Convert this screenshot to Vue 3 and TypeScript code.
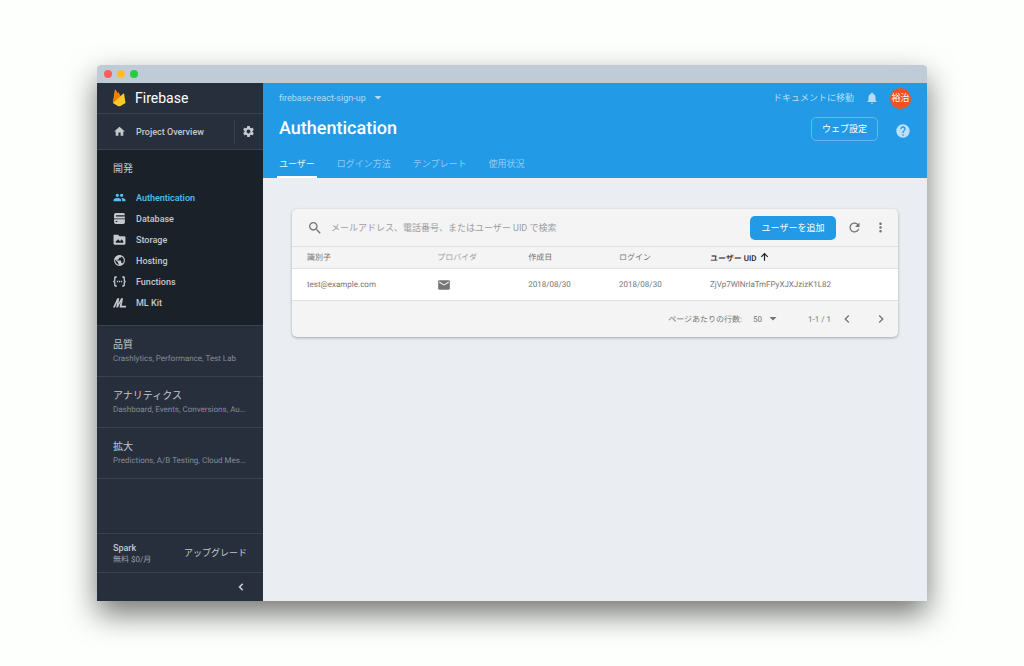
<script setup lang="ts">
import { ref } from 'vue'

interface NavItem {
  label: string
  path: string
  evenodd?: boolean
}
interface Group {
  title: string
  items: string
}

const nav: NavItem[] = [
  {
    label: 'Authentication',
    path: 'M16 11c1.66 0 2.99-1.34 2.99-3S17.66 5 16 5s-3 1.34-3 3 1.34 3 3 3zm-8 0c1.66 0 2.99-1.34 2.99-3S9.66 5 8 5 5 6.34 5 8s1.34 3 3 3zm0 2c-2.33 0-7 1.17-7 3.5V19h14v-2.5c0-2.33-4.67-3.5-7-3.5zm8 0c-.29 0-.62.02-.97.05 1.16.84 1.97 1.97 1.97 3.45V19h6v-2.5c0-2.33-4.67-3.5-7-3.5z',
  },
  {
    label: 'Database',
    path: 'M5 2H19Q22 2 22 5V12H2V5Q2 2 5 2ZM5.500 6V8.500H22V6ZM2 13.500H22V19Q22 22 19 22H5Q2 22 2 19ZM5 16.500V18.500H8V16.500Z',
    evenodd: true,
  },
  {
    label: 'Storage',
    path: 'M1 3H9.500L12 6H21Q23 6 23 8V19.500Q23 21.500 21 21.500H3Q1 21.500 1 19.500ZM5 18H19V15L16 11.500L13 15L9.500 11.500L5 15.500Z',
    evenodd: true,
  },
  {
    label: 'Hosting',
    path: 'M12 2C6.48 2 2 6.48 2 12s4.48 10 10 10 10-4.48 10-10S17.520 2 12 2zm-1 17.930c-3.950-.49-7-3.850-7-7.930 0-.62.08-1.210.21-1.790L9 15v1c0 1.100.9 2 2 2v1.930zm6.900-2.540c-.26-.81-1-1.390-1.900-1.390h-1v-3c0-.55-.45-1-1-1H8v-2h2c.55 0 1-.45 1-1V7h2c1.100 0 2-.9 2-2v-.41c2.930 1.190 5 4.060 5 7.410 0 2.080-.8 3.970-2.100 5.390z',
  },
  {
    label: 'Functions',
    path: 'M7 2.500V5H5.500Q4.500 5 4.500 6V9.500Q4.500 11.500 3 12Q4.500 12.500 4.500 14.500V18Q4.500 19 5.500 19H7V21.500H4.500Q2 21.500 2 19V14.500Q2 13.200 .5 13.200V10.800Q2 10.800 2 9.500V5Q2 2.500 4.500 2.500ZM17 2.500V5H18.500Q19.500 5 19.500 6V9.500Q19.500 11.500 21 12Q19.500 12.500 19.500 14.500V18Q19.500 19 18.500 19H17V21.500H19.500Q22 21.500 22 19V14.500Q22 13.200 23.500 13.200V10.800Q22 10.800 22 9.500V5Q22 2.500 19.500 2.500ZM7 10.800H9.400V13.200H7ZM10.800 10.800H13.200V13.200H10.800ZM14.600 10.800H17V13.200H14.600Z',
  },
  {
    label: 'ML Kit',
    path: 'M0 21L8 4H11.500L10 14L15 4H18.500L16 18H24V21H12L14 11L9 21H6L8 11L3.500 21Z',
  },
]

const groups: Group[] = [
  { title: '品質', items: 'Crashlytics, Performance, Test Lab' },
  { title: 'アナリティクス', items: 'Dashboard, Events, Conversions, Au…' },
  { title: '拡大', items: 'Predictions, A/B Testing, Cloud Mes…' },
]

const tabs = ['ユーザー', 'ログイン方法', 'テンプレート', '使用状況']
const activeTab = ref(0)
const activeNav = ref(0)
const query = ref('')
const pageSize = ref('50')

const users = [
  { id: 'test@example.com', created: '2018/08/30', login: '2018/08/30', uid: 'ZjVp7WlNrIaTmFPyXJXJzizK1L82' },
]
</script>

<template>
  <div class="desktop">
    <div class="window">
      <div class="titlebar">
        <span class="dot red"></span>
        <span class="dot yellow"></span>
        <span class="dot green"></span>
      </div>
      <div class="shell">
        <aside class="sidebar">
          <a class="brand" href="#">
            <svg class="flame" viewBox="0 0 24 32" aria-hidden="true">
              <path d="M1 25L4.500 2.500C4.700 1.300 6 1.200 6.500 2.200L10.500 9.500L1 25Z" fill="#ffa000" />
              <path d="M1 25L6 3L9 8C9.300 6.500 10.900 4.800 11.500 6L15 13Z" fill="#f57c00" />
              <path d="M1 25L19.300 8.300C20 7.600 21 8 21.200 8.900L23.500 25L13.800 30.500C12.800 31 11.800 31 10.800 30.500Z" fill="#ffca28" />
            </svg>
            <span>Firebase</span>
          </a>
          <div class="overview">
            <a class="overview-link" href="#">
              <svg class="nav-icon" viewBox="0 0 24 24" aria-hidden="true"><path d="M10 20v-6h4v6h5v-8h3L12 3 2 12h3v8z" /></svg>
              <span>Project Overview</span>
            </a>
            <button class="gear" aria-label="設定">
              <svg viewBox="0 0 24 24"><path d="M19.430 12.980c.04-.32.07-.64.07-.98s-.03-.66-.07-.98l2.110-1.650c.19-.15.24-.42.12-.64l-2-3.460c-.12-.22-.39-.3-.61-.22l-2.490 1c-.52-.4-1.080-.73-1.690-.98l-.38-2.650C14.460 2.180 14.250 2 14 2h-4c-.25 0-.46.18-.49.42l-.38 2.650c-.61.25-1.170.59-1.690.98l-2.490-1c-.23-.09-.49 0-.61.22l-2 3.460c-.13.22-.07.49.12.64l2.110 1.650c-.04.32-.07.65-.07.98s.03.66.07.98l-2.110 1.650c-.19.15-.24.42-.12.64l2 3.460c.12.22.39.3.61.22l2.490-1c.52.4 1.080.73 1.690.98l.38 2.650c.03.24.24.42.49.42h4c.25 0 .46-.18.49-.42l.38-2.650c.61-.25 1.170-.59 1.690-.98l2.490 1c.23.09.49 0 .61-.22l2-3.460c.12-.22.07-.49-.12-.64l-2.110-1.650zM12 15.500c-1.930 0-3.500-1.570-3.500-3.500s1.570-3.500 3.500-3.500 3.500 1.570 3.500 3.500-1.570 3.500-3.500 3.500z" /></svg>
            </button>
          </div>
          <nav class="develop">
            <h2>開発</h2>
            <a
              v-for="(item, i) in nav"
              :key="item.label"
              href="#"
              class="nav-item"
              :class="{ active: i === activeNav }"
              @click.prevent="activeNav = i"
            >
              <svg class="nav-icon" viewBox="0 0 24 24" aria-hidden="true">
                <path :d="item.path" :fill-rule="item.evenodd ? 'evenodd' : 'nonzero'" />
              </svg>
              <span>{{ item.label }}</span>
            </a>
          </nav>
          <a v-for="g in groups" :key="g.title" href="#" class="group">
            <span class="group-title">{{ g.title }}</span>
            <span class="group-items">{{ g.items }}</span>
          </a>
          <div class="plan">
            <div>
              <div class="plan-name">Spark</div>
              <div class="plan-price">無料 $0/月</div>
            </div>
            <a href="#">アップグレード</a>
          </div>
          <div class="collapse">
            <button aria-label="折りたたむ">
              <svg viewBox="0 0 24 24"><path d="M16 7.410L14 5.500l-6.500 6.500 6.500 6.500 2-2L11.500 12z" /></svg>
            </button>
          </div>
        </aside>

        <main class="main">
          <header class="header">
            <div class="topline">
              <button class="project">
                <span>firebase-react-sign-up</span>
                <svg viewBox="0 0 24 24" aria-hidden="true"><path d="M5 8l7 7 7-7z" /></svg>
              </button>
              <div class="top-actions">
                <a href="#">ドキュメントに移動</a>
                <button class="bell" aria-label="通知">
                  <svg viewBox="0 0 24 24"><path d="M12 22c1.100 0 2-.9 2-2h-4c0 1.100.89 2 2 2zm6-6v-5c0-3.070-1.640-5.640-4.500-6.320V4c0-.83-.67-1.500-1.500-1.500s-1.500.67-1.500 1.500v.68C7.630 5.360 6 7.920 6 11v5l-2 2v1h16v-1l-2-2z" /></svg>
                </button>
                <button class="avatar">裕治</button>
              </div>
            </div>
            <div class="title-row">
              <h1>Authentication</h1>
              <div class="title-actions">
                <button class="web-setup">ウェブ設定</button>
                <button class="help" aria-label="ヘルプ">
                  <svg viewBox="0 0 24 24"><path d="M12 2C6.480 2 2 6.480 2 12s4.480 10 10 10 10-4.480 10-10S17.520 2 12 2zm1 17h-2v-2h2v2zm2.070-7.750l-.9.920C13.450 12.900 13 13.500 13 15h-2v-.5c0-1.100.45-2.100 1.170-2.830l1.240-1.260c.37-.36.59-.86.59-1.410 0-1.100-.9-2-2-2s-2 .9-2 2H8c0-2.210 1.790-4 4-4s4 1.790 4 4c0 .88-.36 1.680-.93 2.250z" /></svg>
                </button>
              </div>
            </div>
            <div class="tabs" role="tablist">
              <button
                v-for="(tab, i) in tabs"
                :key="tab"
                role="tab"
                :aria-selected="i === activeTab"
                :class="{ active: i === activeTab }"
                @click="activeTab = i"
              >
                {{ tab }}
              </button>
            </div>
          </header>

          <section class="content">
            <div class="card">
              <div class="toolbar">
                <label class="search">
                  <svg viewBox="0 0 24 24" aria-hidden="true"><path d="M15.500 14h-.79l-.28-.27C15.410 12.590 16 11.110 16 9.500 16 5.910 13.090 3 9.500 3S3 5.910 3 9.500 5.910 16 9.500 16c1.610 0 3.090-.59 4.230-1.570l.27.28v.79l5 4.990L20.490 19l-4.990-5zm-6 0C7.010 14 5 11.990 5 9.500S7.010 5 9.500 5 14 7.010 14 9.500 11.990 14 9.500 14z" /></svg>
                  <input v-model="query" type="text" placeholder="メールアドレス、電話番号、またはユーザー UID で検索" aria-label="検索" />
                </label>
                <button class="add">ユーザーを追加</button>
                <button class="icon-btn" aria-label="更新">
                  <svg viewBox="0 0 24 24"><path d="M17.650 6.350C16.200 4.900 14.210 4 12 4c-4.420 0-7.990 3.580-7.990 8s3.570 8 7.990 8c3.730 0 6.840-2.550 7.730-6h-2.080c-.82 2.330-3.040 4-5.650 4-3.310 0-6-2.690-6-6s2.690-6 6-6c1.660 0 3.140.69 4.220 1.780L13 11h7V4l-2.350 2.350z" /></svg>
                </button>
                <button class="icon-btn" aria-label="その他">
                  <svg viewBox="0 0 24 24"><path d="M12 8c1.100 0 2-.9 2-2s-.9-2-2-2-2 .9-2 2 .9 2 2 2zm0 2c-1.100 0-2 .9-2 2s.9 2 2 2 2-.9 2-2-.9-2-2-2zm0 6c-1.100 0-2 .9-2 2s.9 2 2 2 2-.9 2-2-.9-2-2-2z" /></svg>
                </button>
              </div>
              <table>
                <colgroup>
                  <col class="c-id" /><col class="c-mid" /><col class="c-mid" /><col class="c-mid" /><col />
                </colgroup>
                <thead>
                  <tr>
                    <th>識別子</th>
                    <th class="light">プロバイダ</th>
                    <th>作成日</th>
                    <th>ログイン</th>
                    <th class="sorted">
                      ユーザー UID
                      <svg viewBox="0 0 24 24" aria-hidden="true"><path d="M4 12l1.800 1.800L10.700 8.900V21h2.600V8.900l4.900 4.900L20 12l-8-8z" /></svg>
                    </th>
                  </tr>
                </thead>
                <tbody>
                  <tr v-for="u in users" :key="u.uid">
                    <td>{{ u.id }}</td>
                    <td>
                      <svg class="mail" viewBox="0 0 24 24" role="img" aria-label="メール"><path d="M20 4H4c-1.100 0-1.990.9-1.990 2L2 18c0 1.100.9 2 2 2h16c1.100 0 2-.9 2-2V6c0-1.100-.9-2-2-2zm0 4l-8 5-8-5V6l8 5 8-5v2z" /></svg>
                    </td>
                    <td>{{ u.created }}</td>
                    <td>{{ u.login }}</td>
                    <td>{{ u.uid }}</td>
                  </tr>
                </tbody>
              </table>
              <div class="pager">
                <label for="rows">ページあたりの行数:</label>
                <span class="select-wrap">
                  <select id="rows" v-model="pageSize">
                    <option>50</option>
                    <option>100</option>
                    <option>250</option>
                  </select>
                  <svg viewBox="0 0 24 24" aria-hidden="true"><path d="M5 8l7 7 7-7z" /></svg>
                </span>
                <span class="range">1-1 / 1</span>
                <button aria-label="前へ"><svg viewBox="0 0 24 24"><path d="M15.410 7.410L14 6l-6 6 6 6 1.410-1.410L10.830 12z" /></svg></button>
                <button aria-label="次へ"><svg viewBox="0 0 24 24"><path d="M10 6L8.590 7.410 13.170 12l-4.580 4.590L10 18l6-6z" /></svg></button>
              </div>
            </div>
          </section>
        </main>
      </div>
    </div>
  </div>
</template>

<style>
body {
  background: #fdfffc;
}
</style>

<style scoped>
* {
  box-sizing: border-box;
}
.desktop {
  display: flex;
  min-height: 100vh;
  padding: 65px 97px;
  background: #fdfffc;
  font-family: Roboto, "Noto Sans CJK JP", sans-serif;
  font-size: 9px;
  line-height: 12px;
}
button,
input,
select {
  font: inherit;
  color: inherit;
  background: none;
  border: 0;
  padding: 0;
  margin: 0;
  text-rendering: inherit;
}
a {
  color: inherit;
  text-decoration: none;
}
svg {
  display: block;
  fill: currentColor;
  flex: none;
}
.window {
  flex: 1;
  display: flex;
  flex-direction: column;
  border-radius: 4px 4px 0 0;
  box-shadow: 0 13px 30px rgba(0, 0, 0, 0.54);
  overflow: hidden;
}
.titlebar {
  display: flex;
  align-items: center;
  gap: 5px;
  height: 18px;
  padding: 0 7px;
  background: #bfccd7;
}
.dot {
  width: 8px;
  height: 8px;
  border-radius: 50%;
}
.red {
  background: #ff5f57;
}
.yellow {
  background: #ffbd2e;
}
.green {
  background: #28ca42;
}
.shell {
  flex: 1;
  display: flex;
}
.sidebar {
  width: 166px;
  flex: none;
  display: flex;
  flex-direction: column;
  background: #272f3d;
  color: #c5c8cc;
}
.brand {
  display: flex;
  align-items: center;
  gap: 9px;
  height: 30px;
  padding: 0 15px;
  color: #fff;
  font-size: 14px;
  line-height: 18px;
}
.flame {
  width: 14px;
  height: 18px;
}
.nav-icon {
  width: 13px;
  height: 13px;
}
.overview {
  display: flex;
  align-items: center;
  height: 37px;
  border-top: 1px solid #37414f;
  border-bottom: 1px solid #37414f;
  font-weight: 500;
}
.overview-link {
  flex: 1;
  display: flex;
  align-items: center;
  gap: 10px;
  padding-left: 16px;
}
.gear {
  display: flex;
  align-items: center;
  justify-content: center;
  width: 29px;
  height: 24px;
  padding-right: 1px;
  border-left: 1px solid #37414f;
}
.gear svg {
  width: 13px;
  height: 13px;
}
.develop {
  background: #1a2129;
  padding: 12px 0;
}
.develop h2 {
  margin: 0 0 11px;
  padding-left: 16px;
  font-size: 10px;
  line-height: 14px;
  font-weight: 400;
}
.nav-item {
  display: flex;
  align-items: center;
  gap: 10px;
  height: 21px;
  padding-left: 16px;
  font-weight: 500;
}
.nav-item.active {
  color: #4fc3f7;
}
.group {
  display: block;
  padding: 11px 16px;
  border-top: 1px solid #37414f;
}
.group-title {
  display: block;
  font-size: 10px;
  line-height: 16px;
}
.group-items {
  display: block;
  font-size: 8px;
  line-height: 12px;
  color: #858b94;
  white-space: nowrap;
  text-rendering: geometricPrecision;
}
.group:has(+ .plan) {
  border-bottom: 1px solid #37414f;
}
.plan {
  display: flex;
  align-items: center;
  justify-content: space-between;
  height: 39px;
  margin-top: auto;
  padding: 0 16px;
  border-top: 1px solid #37414f;
}
.plan-name {
  font-weight: 500;
}
.plan-price {
  font-size: 8px;
  line-height: 11px;
  color: #9a9fa6;
  text-rendering: geometricPrecision;
}
.collapse {
  display: flex;
  align-items: center;
  justify-content: flex-end;
  height: 29px;
  padding-right: 15px;
  border-top: 1px solid #37414f;
}
.collapse svg {
  width: 14px;
  height: 14px;
}
.main {
  flex: 1;
  min-width: 0;
  display: flex;
  flex-direction: column;
  background: #eaeef2;
}
.header {
  background: #229ae6;
  color: #fff;
}
.topline,
.title-row {
  display: flex;
  align-items: center;
  justify-content: space-between;
  padding: 0 16px;
}
.topline {
  height: 30px;
  color: #b4dcf7;
}
.project {
  display: flex;
  align-items: center;
  gap: 6px;
}
.project svg {
  width: 12px;
  height: 12px;
}
.top-actions {
  display: flex;
  align-items: center;
}
.bell {
  margin: 0 11px;
}
.bell svg {
  width: 14px;
  height: 14px;
}
.avatar {
  width: 21px;
  height: 21px;
  border-radius: 50%;
  background: #f4511e;
  color: #fff;
  font-size: 9px;
}
.title-row {
  height: 32px;
}
h1 {
  margin: 0;
  font-size: 18px;
  line-height: 24px;
  font-weight: 500;
  text-rendering: geometricPrecision;
}
.title-actions {
  display: flex;
  align-items: center;
  gap: 17px;
}
.web-setup {
  width: 67px;
  height: 24px;
  border: 1px solid #64b8ee;
  border-radius: 5px;
}
.help {
  padding-top: 4px;
}
.help svg {
  width: 16px;
  height: 16px;
  color: #bce0f8;
}
.tabs {
  display: flex;
  gap: 18px;
  height: 33px;
  padding: 0 14px;
}
.tabs button {
  padding: 6px 2px 0;
  border-bottom: 2px solid transparent;
  color: #90ccf3;
  white-space: nowrap;
}
.tabs .active {
  color: #e4f3fd;
  border-color: #fff;
}
.content {
  flex: 1;
  padding: 31px 29px;
}
.card {
  background: #f4f4f4;
  border-radius: 5px;
  box-shadow: 0 1px 3px rgba(0, 0, 0, 0.3);
  color: #757575;
}
.toolbar {
  display: flex;
  align-items: center;
  height: 37px;
  padding-right: 10px;
}
.search {
  flex: 1;
  display: flex;
  align-items: center;
  gap: 8px;
  padding-left: 15px;
}
.search svg {
  width: 16px;
  height: 16px;
}
.search input {
  flex: 1;
  outline: none;
}
.search input::placeholder {
  color: #9e9e9e;
}
.add {
  width: 86px;
  height: 24px;
  margin-right: 11px;
  border-radius: 5px;
  background: #229ae6;
  color: #fff;
}
.icon-btn {
  margin-left: 11px;
}
.icon-btn svg {
  width: 15px;
  height: 15px;
}
.add + .icon-btn {
  margin-left: 0;
}
table {
  width: 100%;
  table-layout: fixed;
  border-collapse: collapse;
  text-rendering: geometricPrecision;
}
.c-id {
  width: 21.5%;
}
.c-mid {
  width: 15%;
}
th,
td {
  padding: 0 0 0 15px;
  text-align: left;
  font-size: 8px;
  white-space: nowrap;
}
thead tr {
  height: 22px;
  border-top: 1px solid #e0e0e0;
  border-bottom: 1px solid #e0e0e0;
}
th {
  font-weight: 400;
}
.light {
  color: #9e9e9e;
}
.sorted {
  color: #212121;
  font-weight: 500;
}
.sorted svg {
  display: inline-block;
  width: 11px;
  height: 11px;
  vertical-align: -1px;
}
tbody tr {
  height: 32px;
  background: #fff;
  border-bottom: 1px solid #e0e0e0;
}
.mail {
  width: 14px;
  height: 14px;
}
.pager {
  display: flex;
  align-items: center;
  justify-content: flex-end;
  height: 36px;
  padding-right: 9px;
  font-size: 8px;
  line-height: 13px;
  text-rendering: geometricPrecision;
}
.select-wrap {
  display: flex;
  align-items: center;
  margin: 0 29px 0 11px;
}
select {
  appearance: none;
  width: 14px;
}
.select-wrap svg {
  width: 12px;
  height: 12px;
}
.range {
  margin-right: 8px;
}
.pager button + button {
  margin-left: 18px;
}
.pager button svg {
  width: 16px;
  height: 16px;
}
</style>
